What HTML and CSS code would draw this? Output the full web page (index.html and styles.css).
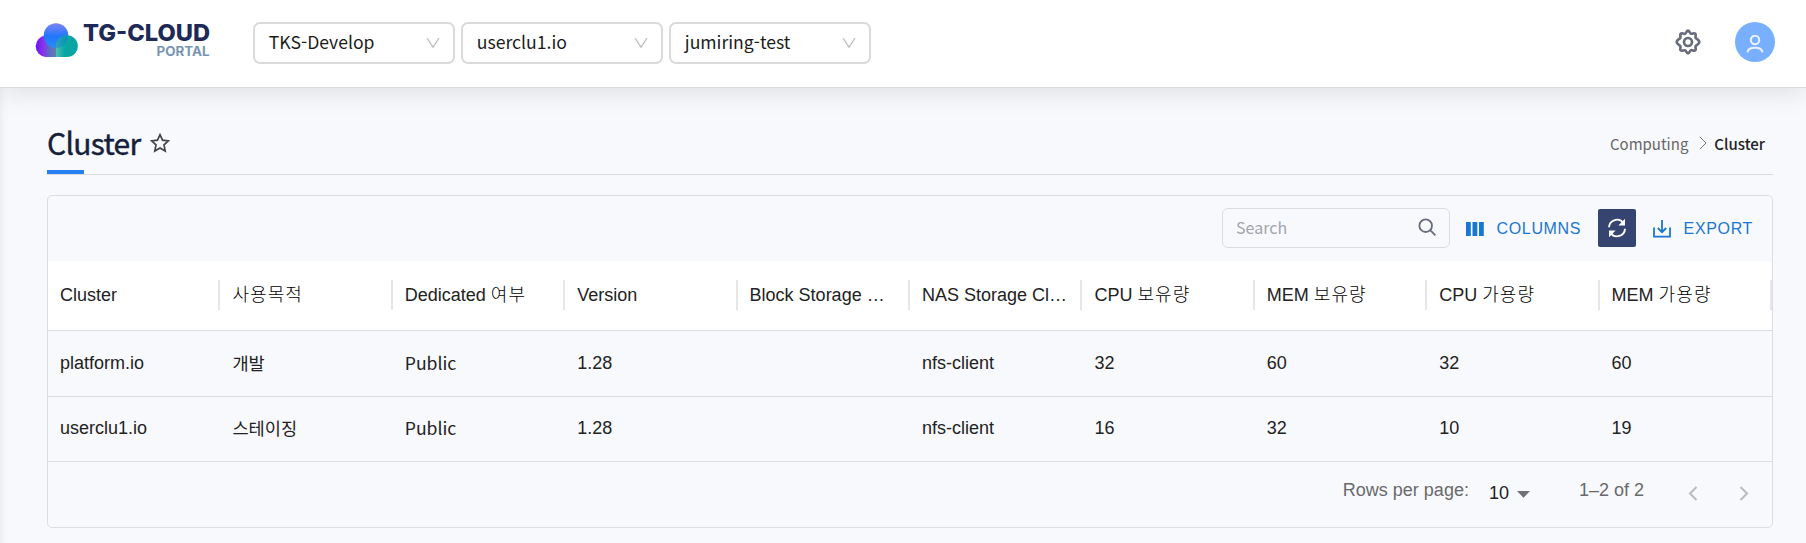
FILE: index.html
```html
<!DOCTYPE html>
<html lang="ko">
<head>
<meta charset="utf-8">
<title>TG-Cloud Portal</title>
<link rel="stylesheet" href="styles.css">
</head>
<body>
<header class="topbar">
  <div class="brand">
    <svg class="brand-mark" width="44" height="35" viewBox="0 0 44 35">
      <defs>
        <linearGradient id="gTop" x1="0" y1="0" x2="0" y2="1"><stop offset="0" stop-color="#7d85f2"/><stop offset=".55" stop-color="#1f76fb"/><stop offset="1" stop-color="#2b8df5"/></linearGradient>
        <linearGradient id="gLeft" x1="0" y1="0" x2="1" y2="0"><stop offset="0" stop-color="#6416f0"/><stop offset=".3" stop-color="#8a2cf0"/><stop offset=".65" stop-color="#5b70c0"/><stop offset="1" stop-color="#6c7fa8"/></linearGradient>
        <linearGradient id="gRight" x1="0" y1="0" x2="1" y2="0"><stop offset="0" stop-color="#4cc0b8"/><stop offset=".4" stop-color="#08a6a2"/><stop offset="1" stop-color="#06a5a5"/></linearGradient>
        <clipPath id="cTop"><circle cx="22" cy="12.500" r="12.300"/></clipPath>
      </defs>
      <path d="M11.500 12.500h12.500v21.500H11.500a10.800 10.800 0 0 1 0-21.500z" fill="url(#gLeft)"/>
      <circle cx="22" cy="12.500" r="12.300" fill="url(#gTop)"/>
      <path d="M22 34V23.200A10.900 10.900 0 1 1 33 34z" fill="url(#gRight)"/>
      <path d="M22 34V23.200A10.900 10.900 0 1 1 33 34z" fill="#1787c4" opacity=".55" clip-path="url(#cTop)"/>
    </svg>
    <div class="brand-text">
      <svg width="129" height="35" viewBox="0 0 129 35">
        <text class="brand-name" x="1" y="18.300" textLength="127" lengthAdjust="spacingAndGlyphs">TG-CLOUD</text>
        <text class="brand-sub" x="74.500" y="32.700" textLength="53" lengthAdjust="spacingAndGlyphs">PORTAL</text>
      </svg>
    </div>
  </div>
  <div class="selects">
    <div class="select"><span>TKS-Develop</span><svg width="14" height="12" viewBox="0 0 14 12"><path d="M1 1l6 9.200L13 1"/></svg></div>
    <div class="select"><span>userclu1.io</span><svg width="14" height="12" viewBox="0 0 14 12"><path d="M1 1l6 9.200L13 1"/></svg></div>
    <div class="select"><span>jumiring-test</span><svg width="14" height="12" viewBox="0 0 14 12"><path d="M1 1l6 9.200L13 1"/></svg></div>
  </div>
  <div class="actions">
    <svg class="gear" width="26" height="26" viewBox="0 0 26 26"><path d="M13 1.700c1.500 0 1.600 2.500 3.100 3 1.300.5 3-1.200 4.200 0s-.3 2.700.3 4.100c.6 1.400 3.700 1.600 3.700 4.200s-3.100 2.800-3.700 4.200c-.6 1.400.9 3-.3 4.100s-2.900-.5-4.200 0c-1.500.5-1.600 3-3.100 3s-1.600-2.500-3.100-3c-1.300-.5-3 1.200-4.200 0s.3-2.700-.3-4.100c-.6-1.400-3.700-1.600-3.700-4.200s3.100-2.800 3.700-4.200c.6-1.400-.9-3 .3-4.100s2.900.5 4.200 0c1.500-.5 1.600-3 3.100-3z"/><circle cx="13" cy="13" r="4"/></svg>
    <div class="avatar"><svg width="18" height="18" viewBox="0 0 18 18"><circle cx="9" cy="5" r="4.200"/><path d="M1.500 17.300c.4-3.300 2.500-4.500 7.500-4.500s7.100 1.200 7.500 4.500"/></svg></div>
  </div>
</header>
<main class="page">
  <div class="page-head">
    <h1 class="title">Cluster</h1>
    <svg class="star" width="20" height="20" viewBox="0 0 20 20"><path d="M10 1.700l2.500 5.400 5.900.7-4.400 4 1.200 6.200-5.200-3-5.200 3L6 11.800l-4.400-4 5.900-.7z"/></svg>
    <nav class="crumbs"><span>Computing</span><svg width="8" height="14" viewBox="0 0 8 14"><path d="M.8.800l6.200 6.200-6.200 6.200"/></svg><b>Cluster</b></nav>
  </div>
  <section class="grid">
    <div class="toolbar">
      <div class="search"><span>Search</span><svg width="19" height="19" viewBox="0 0 19 19"><circle cx="7.700" cy="7.700" r="6.300"/><path d="M12.200 12.200l5.200 5.200"/></svg></div>
      <div class="tool columns"><svg width="18" height="14" viewBox="0 0 18 14"><path d="M0 0h4.800v14H0zM6.500 0h4.800v14H6.500zM13 0h4.800v14H13z"/></svg><span>COLUMNS</span></div>
      <div class="refresh"><svg width="20" height="20" viewBox="0 0 20 20"><path d="M2 9.300a8 8 0 0 1 14.500-4.200M18 10.700A8 8 0 0 1 3.500 14.900"/><path class="tip" d="M18 .800v6.600h-6.600zM2 19.200v-6.600h6.600z"/></svg></div>
      <div class="tool export"><svg width="18" height="18" viewBox="0 0 18 18"><path d="M1 7.500v9.200h16V7.500M9 0v11.500M4.800 8L9 12.200 13.200 8"/></svg><span>EXPORT</span></div>
    </div>
    <div class="row head">
      <div>Cluster</div><div><i>사용목적</i></div><div>Dedicated <i>여부</i></div><div>Version</div><div>Block Storage Class</div><div>NAS Storage Class</div><div>CPU <i>보유량</i></div><div>MEM <i>보유량</i></div><div>CPU <i>가용량</i></div><div>MEM <i>가용량</i></div>
    </div>
    <div class="row first">
      <div>platform.io</div><div class="kr">개발</div><div class="kr">Public</div><div>1.28</div><div></div><div>nfs-client</div><div>32</div><div>60</div><div>32</div><div>60</div>
    </div>
    <div class="row">
      <div>userclu1.io</div><div class="kr">스테이징</div><div class="kr">Public</div><div>1.28</div><div></div><div>nfs-client</div><div>16</div><div>32</div><div>10</div><div>19</div>
    </div>
    <footer class="pager">
      <span class="rpp">Rows per page:</span>
      <span class="size">10</span>
      <svg class="caret" width="13" height="7" viewBox="0 0 13 7"><path d="M0 0h13L6.500 6.800z"/></svg>
      <span class="range">1–2 of 2</span>
      <svg class="arrow" width="10" height="15" viewBox="0 0 10 15"><path d="M8.500 1L2 7.500 8.500 14"/></svg>
      <svg class="arrow next" width="10" height="15" viewBox="0 0 10 15"><path d="M1.500 1L8 7.500 1.500 14"/></svg>
    </footer>
  </section>
</main>
</body>
</html>
```
FILE: styles.css
```css
* { box-sizing: border-box; }
body {
  margin: 0;
  height: 543px;
  overflow: hidden;
  background: #f8f9fd;
  color: #222;
  font-family: "Noto Sans CJK KR", sans-serif;
}
svg { display: block; fill: none; flex: none; }
.topbar {
  position: relative;
  z-index: 1;
  display: flex;
  height: 88px;
  padding: 22px 31px 0 34px;
  background: #fff;
  border-bottom: 1px solid #dcdce0;
  box-shadow: 0 4px 26px rgba(0, 0, 0, .11);
}
.brand { display: flex; width: 219px; padding-top: 1px; }
.brand-text { margin-left: 4px; }
.brand-text svg { overflow: visible; }
.brand-name { font: 800 23.500px Inter, sans-serif; fill: #1d2956; }
.brand-sub { font: 700 13px Inter, sans-serif; fill: #7795b3; }
.selects { display: flex; gap: 6px; }
.select {
  display: flex;
  align-items: center;
  justify-content: space-between;
  width: 202px;
  height: 42px;
  padding: 0 13px 3px 13.800px;
  border: 2px solid #dadada;
  border-radius: 7px;
  font-size: 17.600px;
  color: #1c1c1c;
}
.select svg { margin-top: 2px; stroke: #bfbfbf; stroke-width: 1.300; }
.actions { display: flex; margin-left: auto; gap: 34px; }
.gear { margin-top: 7px; stroke: #686c7d; stroke-width: 2.700; }
.avatar { display: grid; place-items: center; width: 40px; height: 40px; border-radius: 50%; background: #79afff; }
.avatar svg { margin-top: 3px; stroke: #e6f0ff; stroke-width: 2.100; }
.page {
  height: 455px;
  padding: 32px 33px 0 47px;
  box-shadow: inset 8px 0 9px -7px rgba(0, 0, 0, .07);
}
.page-head {
  display: flex;
  height: 55px;
  background: linear-gradient(#2680f0, #2680f0) 0 50px / 37px 4px no-repeat;
  border-bottom: 1px solid #d9dadd;
}
.title { margin: 0; font-size: 30px; font-weight: 400; letter-spacing: -.7px; line-height: 45px; color: #15203a; -webkit-text-stroke: .4px #15203a; }
.star { margin: 13px 0 0 9.500px; stroke: #444; stroke-width: 1.700; }
.crumbs { display: flex; align-items: center; height: 46px; margin-left: auto; padding-right: 8px; font-size: 15px; color: #666; }
.crumbs svg { margin: 0 7px 0 11px; stroke: #777; stroke-width: 1; }
.crumbs b { font-weight: 500; color: #222; }
.grid {
  height: 333px;
  margin-top: 20px;
  border: 1px solid #dcdee1;
  border-radius: 5px;
  overflow: hidden;
  font-family: "Liberation Sans", "Noto Sans CJK KR", sans-serif;
  font-size: 18px;
}
.toolbar { display: flex; align-items: center; justify-content: flex-end; height: 65px; padding: 0 19px 1px 0; }
.search {
  display: flex;
  align-items: center;
  justify-content: space-between;
  width: 228px;
  height: 40px;
  padding: 0 12px 2px 13px;
  border: 1px solid #dcdcdf;
  border-radius: 6px;
  font: 16px "Noto Sans CJK KR", sans-serif;
  color: #a2a5ac;
}
.search svg { stroke: #686c7d; stroke-width: 1.800; }
.tool { display: flex; align-items: center; padding-top: 1px; font-size: 16px; letter-spacing: .65px; color: #1976d2; }
.columns { margin-left: 15.500px; }
.columns svg { margin-right: 13px; fill: #1976d2; }
.export svg { margin-right: 13px; stroke: #1976d2; stroke-width: 1.800; }
.refresh { display: grid; place-items: center; width: 38px; height: 38px; margin: 0 17px 0 16.500px; border-radius: 2px; background: #354471; }
.refresh svg { stroke: #fff; stroke-width: 1.900; }
.refresh .tip { fill: #fff; stroke: none; }
.row { display: grid; grid-template-columns: repeat(10, 1fr); height: 65px; border-bottom: 1px solid #dcdee1; line-height: 62px; }
.row > div { padding: 0 14px 0 12px; overflow: hidden; white-space: nowrap; text-overflow: ellipsis; }
.row .kr { font-family: "Noto Sans CJK KR", sans-serif; font-size: 17.600px; line-height: 61px; }
.head {
  height: 70px;
  background: #fff;
  line-height: 69px;
}
.head > div { background: linear-gradient(#e6e6e6, #e6e6e6) right 19px / 2px 30px no-repeat; }
.head i { font-style: normal; font-weight: 300; letter-spacing: 1.100px; color: #000; }
.first { height: 66px; line-height: 65px; }
.first .kr { line-height: 63px; }
.pager { display: flex; height: 65px; padding: 0 23px 0 0; justify-content: flex-end; color: #68696c; line-height: 20px; }
.rpp, .range { padding-top: 18px; }
.size { margin-left: 20px; padding-top: 21px; color: #222; }
.caret { margin: 29px 49px 0 8px; fill: #707174; }
.arrow { margin: 24px 0 0 44px; stroke: #bbbcbf; stroke-width: 2.100; }
.next { margin-left: 41px; }
```
